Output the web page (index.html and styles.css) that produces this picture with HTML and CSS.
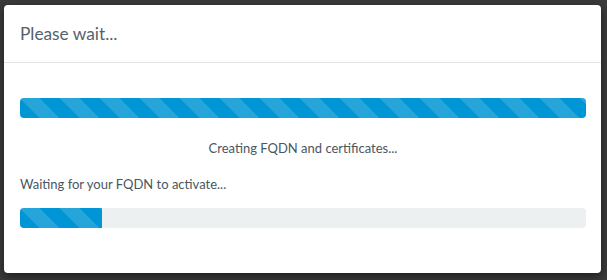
FILE: index.html
```html
<!DOCTYPE html>
<html>
<head>
<meta charset="utf-8">
<link rel="stylesheet" href="styles.css">
</head>
<body>
<div class="backdrop">
  <div class="modal">
    <div class="modal-header">
      <h4 class="modal-title">Please wait...</h4>
    </div>
    <div class="modal-body">
      <div class="progress">
        <div class="progress-bar" style="width: 100%"></div>
      </div>
      <p class="status">Creating FQDN and certificates...</p>
      <p class="label">Waiting for your FQDN to activate...</p>
      <div class="progress track">
        <div class="progress-bar partial" style="width: 14.5%"></div>
      </div>
    </div>
  </div>
</div>
</body>
</html>
```
FILE: styles.css
```css
html, body {
  margin: 0;
  padding: 0;
  width: 607px;
  height: 280px;
  overflow: hidden;
  background: #3a3a3a;
  font-family: Lato, "Open Sans", sans-serif;
}
.backdrop {
  padding: 5px 6px 0 4px;
}
.modal {
  background: #fff;
  height: 268px;
  border-radius: 4px;
  box-shadow: 0 3px 10px rgba(0, 0, 0, 0.5);
  box-sizing: border-box;
}
.modal-header {
  height: 58px;
  border-bottom: 1px solid #e2e5e7;
  display: flex;
  align-items: center;
  padding: 0 16px;
  box-sizing: border-box;
}
.modal-title {
  margin: 0;
  font-size: 17.3px;
  font-weight: 400;
  color: #55626c;
}
.modal-body {
  padding: 35px 15px 0 16px;
}
.progress {
  height: 20px;
  border-radius: 4px;
  overflow: hidden;
  background: #ecf0f1;
}
.progress-bar {
  height: 100%;
  background-color: #0095d5;
  background-image: linear-gradient(45deg,
    rgba(255,255,255,.15) 25%, transparent 25%, transparent 50%,
    rgba(255,255,255,.15) 50%, rgba(255,255,255,.15) 75%, transparent 75%, transparent);
  background-size: 40px 40px;
}
.status {
  margin: 20px 0 0;
  text-align: center;
  font-size: 13px;
  line-height: 20px;
  color: #4a5660;
}
.label {
  margin: 16px 0 0;
  font-size: 13px;
  line-height: 20px;
  color: #4a5660;
}
.track {
  margin-top: 14px;
}
```
